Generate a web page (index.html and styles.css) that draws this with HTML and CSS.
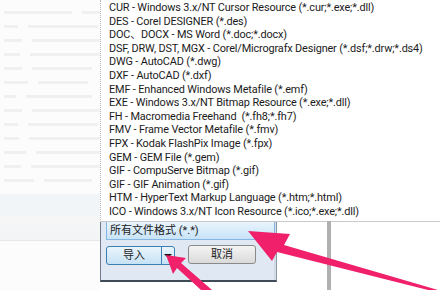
FILE: index.html
```html
<!DOCTYPE html>
<html lang="zh-CN">
<head>
    <meta charset="UTF-8">
    <title>导入文件格式</title>
    <link rel="stylesheet" href="styles.css">
</head>
<body>
    <div class="shot">
        <!-- 左侧淡化背景 -->
        <div class="faded">
            <div class="ghost-row"><span style="width:70px"></span><span style="width:18px"></span></div>
            <div class="ghost-row"><span style="width:14px"></span><span style="width:70px"></span></div>
            <div class="ghost-row"><span style="width:20px"></span><span style="width:76px"></span></div>
            <div class="ghost-row"><span style="width:16px"></span><span style="width:72px"></span></div>
            <div class="ghost-row"><span style="width:18px"></span><span style="width:60px"></span></div>
            <div class="ghost-row"><span style="width:24px"></span><span style="width:50px"></span></div>
            <div class="ghost-row"><span style="width:12px"></span><span style="width:66px"></span></div>
            <div class="ghost-row"><span style="width:20px"></span><span style="width:74px"></span></div>
            <div class="ghost-row"><span style="width:14px"></span><span style="width:70px"></span></div>
            <div class="ghost-row"><span style="width:16px"></span><span style="width:76px"></span></div>
            <div class="ghost-row"><span style="width:22px"></span><span style="width:66px"></span></div>
            <div class="ghost-row"><span style="width:18px"></span><span style="width:72px"></span></div>
            <div class="ghost-row"><span style="width:30px"></span><span style="width:48px"></span></div>
            <div class="ghost-band"></div>
            <div class="ghost-bar"></div>
        </div>

        <div class="main">
            <!-- 文件类型下拉列表 -->
            <ul class="type-list">
                <li>CUR - Windows 3.x/NT Cursor Resource (*.cur;*.exe;*.dll)</li>
                <li>DES - Corel DESIGNER (*.des)</li>
                <li>DOC、DOCX - MS Word (*.doc;*.docx)</li>
                <li>DSF, DRW, DST, MGX - Corel/Micrografx Designer (*.dsf;*.drw;*.ds4)</li>
                <li>DWG - AutoCAD (*.dwg)</li>
                <li>DXF - AutoCAD (*.dxf)</li>
                <li>EMF - Enhanced Windows Metafile (*.emf)</li>
                <li>EXE - Windows 3.x/NT Bitmap Resource (*.exe;*.dll)</li>
                <li>FH - Macromedia Freehand&nbsp; (*.fh8;*.fh7)</li>
                <li>FMV - Frame Vector Metafile (*.fmv)</li>
                <li>FPX - Kodak FlashPix Image (*.fpx)</li>
                <li>GEM - GEM File (*.gem)</li>
                <li>GIF - CompuServe Bitmap (*.gif)</li>
                <li>GIF - GIF Animation (*.gif)</li>
                <li>HTM - HyperText Markup Language (*.htm;*.html)</li>
                <li>ICO - Windows 3.x/NT Icon Resource (*.ico;*.exe;*.dll)</li>
            </ul>

            <div class="lower">
                <div class="dialog">
                    <div class="combo">所有文件格式 (*.*)</div>
                    <div class="buttons">
                        <div class="btn split">
                            <span class="btn-label">导入</span>
                            <span class="btn-arrow"></span>
                        </div>
                        <div class="btn cancel">取消</div>
                    </div>
                </div>
                <div class="gap"></div>
                <div class="scroll-bar"></div>
            </div>
        </div>

        <!-- 红色指示箭头 -->
        <svg class="arrows" width="440" height="290" viewBox="0 0 440 290">
            <polygon points="438,290 284,245 290,234 248,231 272,261 277,252 428,290" fill="#f0206a"/>
            <polygon points="212,290 181,263 186,258 166,255 173,274 177,268 201,290" fill="#f0206a"/>
        </svg>
    </div>
</body>
</html>
```

FILE: styles.css
```css
body {
    margin: 0;
    background: #fff;
    font-family: Roboto, "Noto Sans CJK SC", sans-serif;
}

.shot {
    position: relative;
    width: 440px;
    height: 290px;
    overflow: hidden;
    display: flex;
}

/* 左侧淡化背景 */
.faded {
    width: 100px;
    flex-shrink: 0;
    padding-top: 6px;
    background: #fcfcfc;
}

.ghost-row {
    display: flex;
    gap: 10px;
    height: 14px;
    padding-left: 4px;
}

.ghost-row span {
    height: 3px;
    margin-top: 5px;
    background: #f0f0f0;
}

.ghost-band {
    height: 22px;
    margin-top: 6px;
    background: #f1f5f8;
}

.ghost-bar {
    height: 24px;
    border-bottom: 1px solid #e8e8e8;
    background: linear-gradient(#f7f7f7, #f2f4f6);
}

.main {
    flex: 1;
    display: flex;
    flex-direction: column;
}

/* 下拉列表 */
.type-list {
    list-style: none;
    margin: 0;
    padding: 1px 0 0 8px;
    height: 220px;
    background: #fff;
    border-left: 1px dotted #b8b8b8;
    border-bottom: 1px solid #c9c9c9;
    font-size: 10.9px;
    letter-spacing: -0.15px;
    line-height: 13.6px;
    color: #1b1b1b;
    white-space: nowrap;
}

.lower {
    flex: 1;
    display: flex;
}

/* 对话框底部 */
.dialog {
    width: 170px;
    height: 58px;
    padding: 0 0 0 5px;
    background: #e0e9f3;
    border-left: 1px solid #6d7d8d;
    border-right: 1px solid #8c9aa8;
    border-bottom: 2px solid #3e4a56;
    box-shadow: inset -2px 0 0 #d0dbe6;
}

.combo {
    height: 17px;
    margin-right: 1px;
    padding-left: 3px;
    border: 1px solid #86b7e4;
    border-top: none;
    background: linear-gradient(#e9f4fc, #c8e3f8);
    font-size: 11px;
    line-height: 17px;
    color: #1b1b1b;
}

.buttons {
    display: flex;
    gap: 13px;
    margin-top: 6px;
}

.btn {
    height: 17px;
    border-radius: 3px;
    font-size: 11px;
    line-height: 17px;
    color: #1b1b1b;
    text-align: center;
}

.split {
    width: 67px;
    display: flex;
    border: 1px solid #3c7fb1;
    background: linear-gradient(#eaf5fc, #c6e2f6);
}

.btn-label {
    flex: 1;
}

.btn-arrow {
    width: 12px;
    border-left: 1px solid #3c7fb1;
    position: relative;
}

.btn-arrow::after {
    content: "";
    position: absolute;
    left: 2px;
    top: 7px;
    border-left: 4px solid transparent;
    border-right: 4px solid transparent;
    border-top: 4px solid #111;
}

.cancel {
    width: 66px;
    margin-top: -1px;
    border: 1px solid #8a8a8a;
    background: linear-gradient(#f4f4f4, #dadada);
}

.gap {
    width: 50px;
}

.scroll-bar {
    width: 4px;
    margin-top: -1px;
    background: #b0b0b0;
}

/* 指示箭头 */
.arrows {
    position: absolute;
    left: 0;
    top: 0;
}
```
